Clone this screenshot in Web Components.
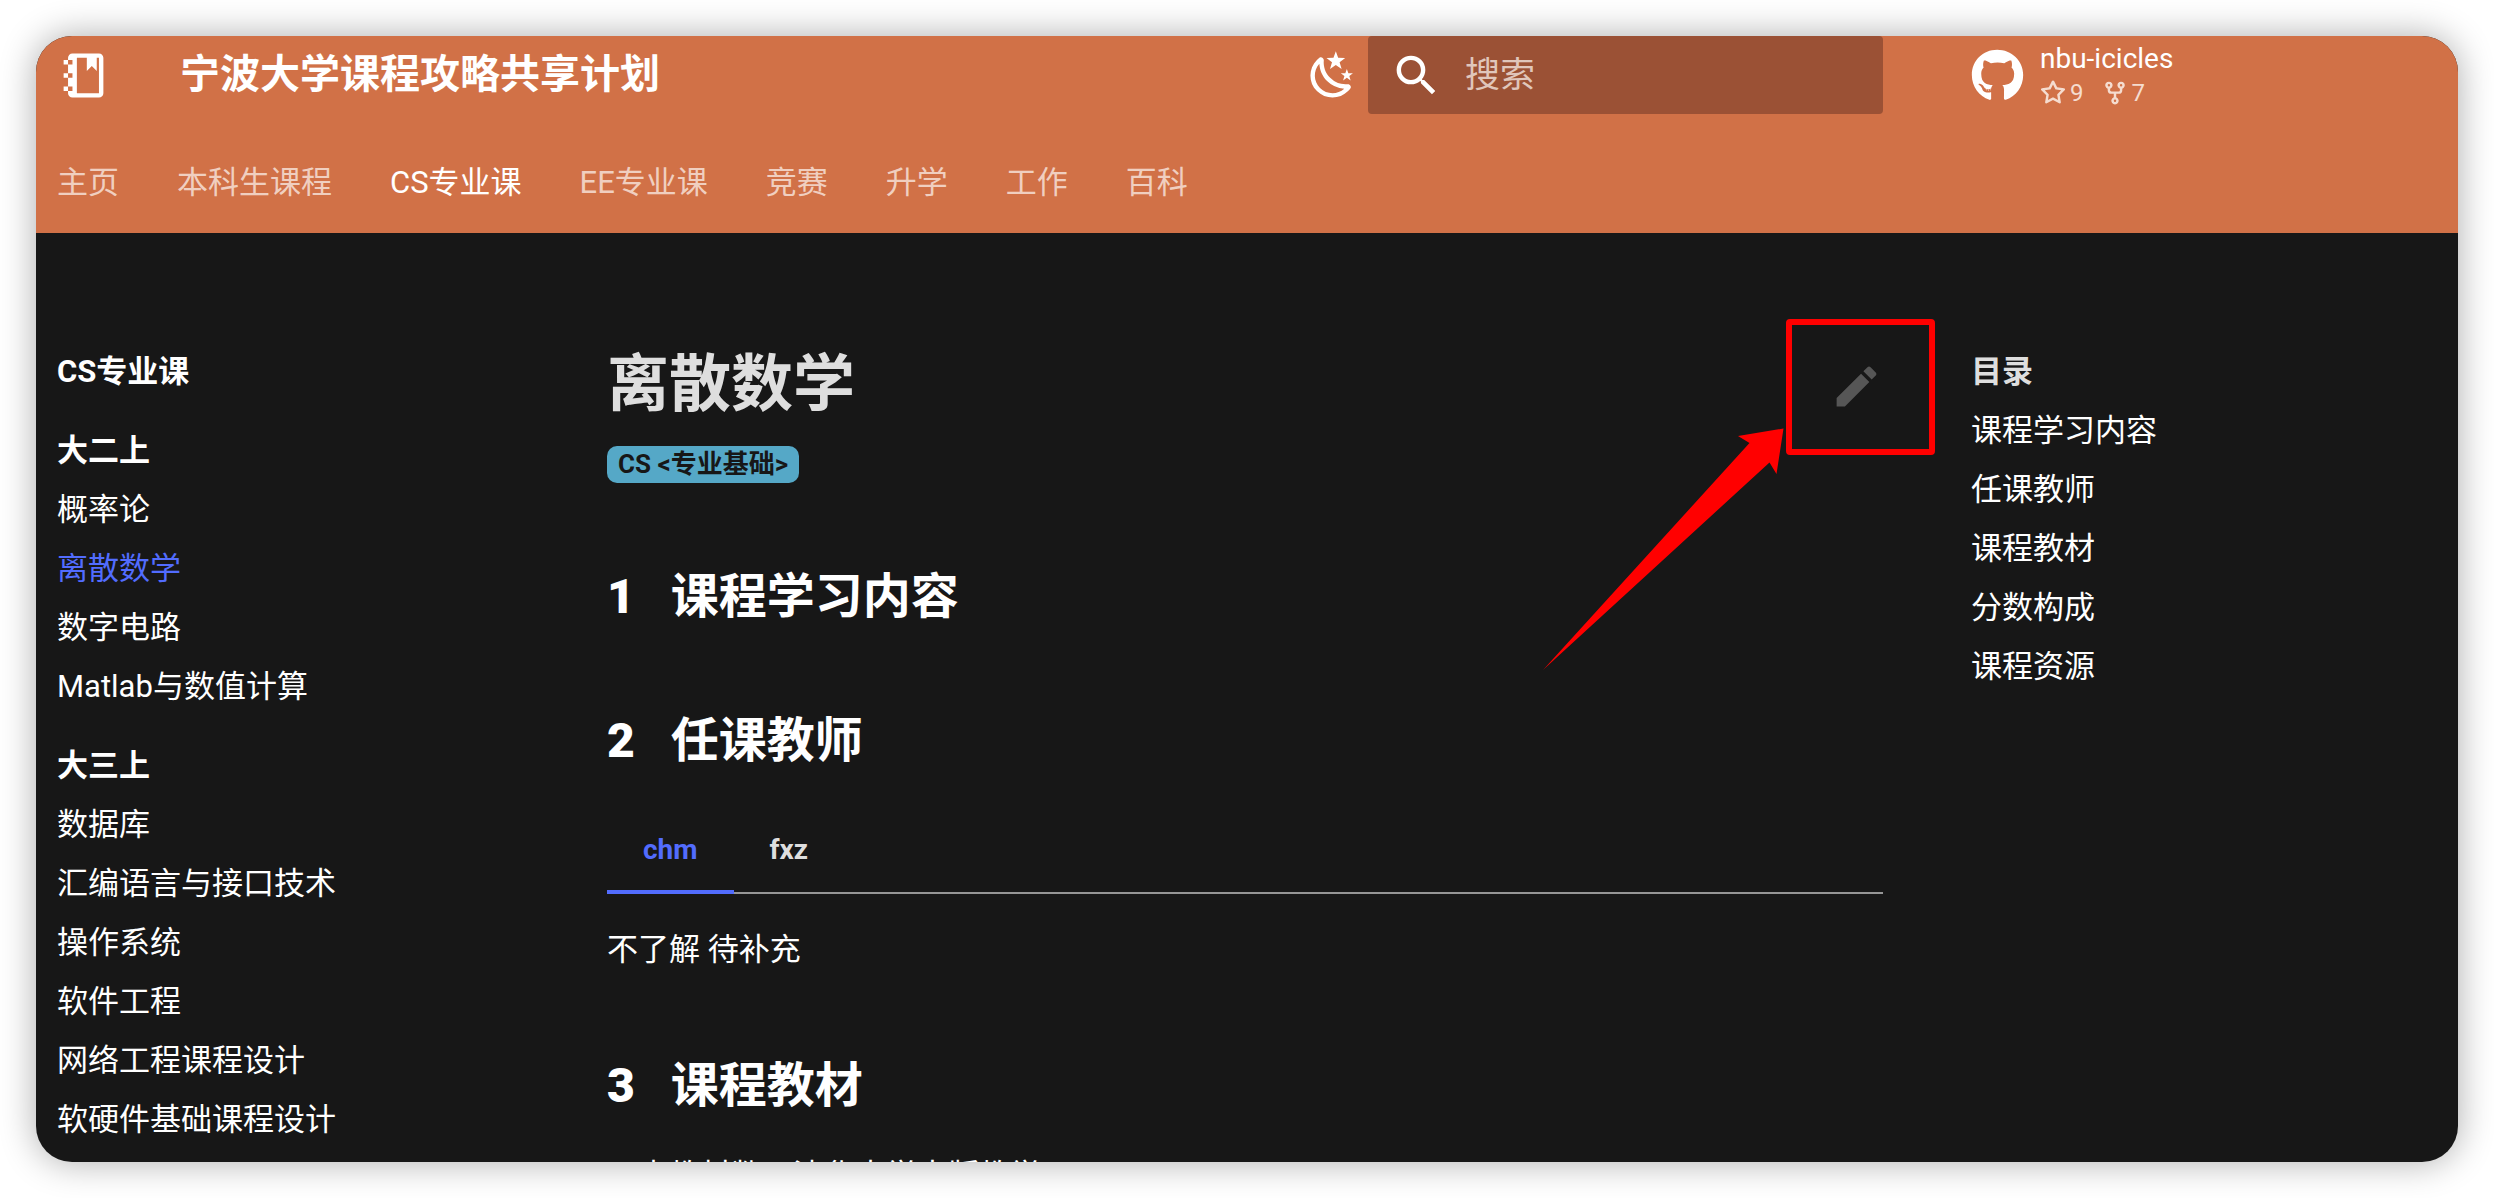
<!DOCTYPE html>
<html lang="zh-CN">
<head>
<meta charset="utf-8">
<title>离散数学 - 宁波大学课程攻略共享计划</title>
<style>
  html, body { margin: 0; height: 100%; }
  body {
    background: #fff;
    font-family: Roboto, "Noto Sans CJK SC", sans-serif;
    --primary: #d17147;
    --accent: #526cfe;
    --page: #171717;
    --muted: #dedede;
    --side: 532px;
  }
</style>
</head>
<body>
<course-site></course-site>

<script>
const define = (name, html, setup) => customElements.define(name, class extends HTMLElement {
  constructor() {
    super();
    this.attachShadow({ mode: 'open' }).innerHTML = html;
    if (setup) setup.call(this);
  }
});

const ICONS = {
  notebook: ['0 0 24 24', 'M3 7V5h2V4c0-1.1.9-2 2-2h12c1.1 0 2 .9 2 2v16c0 1.1-.9 2-2 2H7c-1.1 0-2-.9-2-2v-1H3v-2h2v-4H3v-2h2V7H3ZM5 5v2h2V5H5Zm0 6v2h2v-2H5Zm0 6v2h2v-2H5ZM9 4v16h10V4h-1v6l-2.25-2.25L13.5 10V4H9Z'],
  moon: ['0 0 24 24', 'm17.75 4.09-2.53 1.94.91 3.06-2.63-1.81-2.63 1.81.91-3.06-2.53-1.94L12.44 4l1.06-3 1.06 3 3.19.09m3.5 6.91-1.64 1.25.59 1.98-1.7-1.17-1.7 1.17.59-1.98L15.75 11l2.06-.05L18.5 9l.69 1.95 2.06.05m-2.28 4.95c.83-.08 1.72 1.1 1.19 1.85-.32.45-.66.87-1.08 1.27C15.17 23 8.84 23 4.94 19.07c-3.91-3.9-3.91-10.24 0-14.14.4-.4.82-.76 1.27-1.08.75-.53 1.93.36 1.85 1.19-.27 2.86.69 5.83 2.89 8.02a9.96 9.96 0 0 0 8.02 2.89m-1.64 2.02a12.08 12.08 0 0 1-7.8-3.47c-2.17-2.19-3.33-5-3.49-7.82-2.81 3.14-2.7 7.96.31 10.98 3.02 3.01 7.84 3.12 10.98.31Z'],
  magnify: ['0 0 24 24', 'M9.5 3A6.5 6.5 0 0 1 16 9.5c0 1.61-.59 3.09-1.56 4.23l.27.27h.79l5 5-1.5 1.5-5-5v-.79l-.27-.27A6.516 6.516 0 0 1 9.5 16 6.5 6.5 0 0 1 3 9.5 6.5 6.5 0 0 1 9.5 3m0 2C7 5 5 7 5 9.5S7 14 9.5 14 14 12 14 9.5 12 5 9.5 5Z'],
  pencil: ['0 0 24 24', 'M20.71 7.04c.39-.39.39-1.04 0-1.41l-2.34-2.34c-.37-.39-1.02-.39-1.41 0l-1.84 1.83 3.75 3.75M3 17.25V21h3.75L17.81 9.93l-3.75-3.75L3 17.25Z'],
  star: ['0 0 16 16', 'M8 .25a.75.75 0 0 1 .673.418l1.882 3.815 4.21.612a.75.75 0 0 1 .416 1.279l-3.046 2.97.719 4.192a.751.751 0 0 1-1.088.791L8 12.347l-3.766 1.98a.75.75 0 0 1-1.088-.79l.72-4.194L.818 6.374a.75.75 0 0 1 .416-1.28l4.21-.611L7.327.668A.75.75 0 0 1 8 .25Zm0 2.445L6.615 5.5a.75.75 0 0 1-.564.41l-3.097.45 2.24 2.184a.75.75 0 0 1 .216.664l-.528 3.084 2.769-1.456a.75.75 0 0 1 .698 0l2.77 1.456-.53-3.084a.75.75 0 0 1 .216-.664l2.24-2.183-3.096-.45a.75.75 0 0 1-.564-.41L8 2.694Z'],
  fork: ['0 0 16 16', 'M5 5.372v.878c0 .414.336.75.75.75h4.5a.75.75 0 0 0 .75-.75v-.878a2.25 2.25 0 1 1 1.5 0v.878a2.25 2.25 0 0 1-2.25 2.25h-1.5v2.128a2.251 2.251 0 1 1-1.5 0V8.5h-1.5A2.25 2.25 0 0 1 3.5 6.25v-.878a2.25 2.25 0 1 1 1.5 0ZM5 3.25a.75.75 0 1 0-1.5 0 .75.75 0 0 0 1.5 0Zm6.75.75a.75.75 0 1 0 0-1.5.75.75 0 0 0 0 1.5Zm-3 8.75a.75.75 0 1 0-1.5 0 .75.75 0 0 0 1.5 0Z'],
  github: ['0 0 496 512', 'M165.9 397.4c0 2-2.3 3.6-5.2 3.6-3.3.3-5.6-1.3-5.6-3.6 0-2 2.3-3.6 5.2-3.6 3-.3 5.6 1.3 5.6 3.6zm-31.1-4.5c-.7 2 1.3 4.3 4.3 4.9 2.6 1 5.6 0 6.2-2s-1.3-4.3-4.3-5.2c-2.6-.7-5.5.3-6.2 2.3zm44.2-1.7c-2.9.7-4.9 2.6-4.6 4.9.3 2 2.9 3.3 5.9 2.6 2.9-.7 4.9-2.6 4.6-4.6-.3-1.9-3-3.2-5.9-2.9zM244.8 8C106.1 8 0 113.3 0 252c0 110.9 69.8 205.8 169.5 239.2 12.8 2.3 17.3-5.6 17.3-12.1 0-6.2-.3-40.4-.3-61.4 0 0-70 15-84.7-29.8 0 0-11.4-29.1-27.8-36.6 0 0-22.9-15.7 1.6-15.4 0 0 24.9 2 38.6 25.8 21.9 38.6 58.6 27.5 72.9 20.9 2.3-16 8.8-27.1 16-33.7-55.9-6.2-112.3-14.3-112.3-110.5 0-27.5 7.6-41.3 23.6-58.9-2.6-6.5-11.1-33.3 2.6-67.9 20.9-6.5 69 27 69 27 20-5.6 41.5-8.5 62.8-8.5s42.8 2.9 62.8 8.5c0 0 48.1-33.6 69-27 13.7 34.7 5.2 61.4 2.6 67.9 16 17.7 25.8 31.5 25.8 58.9 0 96.5-58.9 104.2-114.8 110.5 9.2 7.9 17 22.9 17 46.4 0 33.7-.3 75.4-.3 83.6 0 6.5 4.6 14.4 17.3 12.1C428.2 457.8 496 362.9 496 252 496 113.3 383.5 8 244.8 8z']
};

define('ui-icon', `<style>
  :host { display: block; flex: none; width: var(--size, 53px); height: var(--size, 53px); }
  svg { display: block; width: 100%; height: 100%; fill: currentColor; }
</style><svg aria-hidden="true"><path fill-rule="evenodd"/></svg>`, function () {
  const [box, d] = ICONS[this.getAttribute('name')];
  this.shadowRoot.querySelector('svg').setAttribute('viewBox', box);
  this.shadowRoot.querySelector('path').setAttribute('d', d);
});

define('search-box', `<style>
  :host { display: block; width: 515px; }
  label { display: flex; align-items: center; height: 78px; padding-left: 22px; gap: 22px; box-sizing: border-box;
    background: #9b5135; border-radius: 4px; color: #fff; }
  input { flex: 1; min-width: 0; border: 0; padding: 2px 0 0; background: none; outline: 0;
    font: 35px/50px Roboto, "Noto Sans CJK SC", sans-serif; color: #fff; }
  input::placeholder { color: #e0c6bb; opacity: 1; }
</style><label><ui-icon name="magnify"></ui-icon><input type="text" placeholder="搜索" aria-label="搜索"></label>`);

define('repo-link', `<style>
  :host { display: block; }
  a { display: flex; align-items: center; gap: 16px; color: #fff; text-decoration: none; font-size: 28px; line-height: 36px; }
  ul { display: flex; gap: 18px; margin: 0; padding: 0; list-style: none; font-size: 24px; line-height: 32px; color: #f5dccf; }
  li { display: flex; align-items: center; gap: 4px; }
  li ui-icon { --size: 26px; }
</style><a href="#repo"><ui-icon name="github"></ui-icon><div>nbu-icicles
  <ul><li><ui-icon name="star"></ui-icon>9</li><li><ui-icon name="fork"></ui-icon>7</li></ul></div></a>`);

define('site-header', `<style>
  :host { display: block; background: var(--primary); color: #fff; }
  .bar { display: flex; align-items: center; height: 78px; padding-left: 21px; }
  .home { color: #fff; }
  .title { flex: 1; padding-left: 70px; font-size: 40px; font-weight: 700; line-height: 56px; }
  .mode { border: 0; padding: 0; margin-right: 9px; background: none; color: #fff; }
  repo-link { width: 487px; margin-left: 88px; }
  nav { display: flex; gap: 58px; padding: 47px 0 28px 21px; font-size: 31px; line-height: 44px; }
  a { color: #f0cfc0; text-decoration: none; }
  a.on { color: #fff; }
</style>
<div class="bar">
  <a class="home" href="#" aria-label="首页"><ui-icon name="notebook"></ui-icon></a>
  <span class="title">宁波大学课程攻略共享计划</span>
  <button class="mode" aria-label="切换主题"><ui-icon name="moon"></ui-icon></button>
  <search-box></search-box><repo-link></repo-link>
</div>
<nav><a href="#">主页</a><a href="#">本科生课程</a><a class="on" href="#">CS专业课</a><a href="#">EE专业课</a><a href="#">竞赛</a><a href="#">升学</a><a href="#">工作</a><a href="#">百科</a></nav>`);

define('nav-item', `<style>
  :host { display: block; margin-top: 15px; }
  :host([head]) { font-weight: 700; }
  :host([group]) { margin-top: 35px; }
  :host([current]) { --link: var(--accent); }
  a { display: block; color: var(--link, #fff); text-decoration: none; }
</style><a href="#"><slot></slot></a>`);

define('side-nav', `<style>
  :host { display: block; font-size: 31px; line-height: 44px; }
  h2 { margin: 0; font-size: 31px; font-weight: 700; color: var(--head, #fff); }
</style><nav><h2><slot name="title"></slot></h2><slot></slot></nav>`);

define('course-tabs', `<style>
  :host { display: block; margin-top: 31px; }
  .row { display: flex; box-shadow: inset 0 -2px #969696; }
  button { border: 0; border-bottom: 4px solid transparent; background: none; padding: 22px 36px 18px;
    font: 700 28px/44px Roboto, sans-serif; color: var(--muted); }
  button[aria-selected=true] { color: var(--accent); border-color: var(--accent); }
  p { margin: 34px 0 0; font-size: 31px; line-height: 44px; color: #fff; }
</style><div class="row" role="tablist"><button role="tab" aria-selected="true">chm</button><button role="tab" aria-selected="false">fxz</button></div><p><slot></slot></p>`);

define('section-title', `<style>
  :host { display: block; }
  h2 { display: flex; gap: 36px; margin: 0; font-size: 48px; line-height: 68px; font-weight: 700; color: #fff; }
</style><h2><b></b><slot></slot></h2>`, function () {
  this.shadowRoot.querySelector('b').textContent = this.getAttribute('number');
});

define('edit-button', `<style>
  :host { display: block; position: relative; flex: none; }
  button { display: block; border: 0; padding: 0; background: none; color: #565656; }
  .frame { position: absolute; left: -44px; top: -41px; width: 137px; height: 124px; border: 6px solid #f00; border-radius: 4px; }
  .arrow { position: absolute; right: 99px; top: 68px; width: 241px; height: 242px; fill: #f00; }
</style><button aria-label="编辑此页"><ui-icon name="pencil"></ui-icon></button>
<div class="frame"></div>
<svg class="arrow" viewBox="0 0 241 242" aria-hidden="true"><path d="M0 242 206.500 15 195 8 240.500 0.500 233.500 46 226.500 34.500Z"/></svg>`);

define('course-article', `<style>
  :host { display: block; color: #fff; }
  header { display: flex; justify-content: space-between; align-items: center; padding-top: 3px; }
  h1 { margin: 0; padding-bottom: 2px; font-size: 62px; line-height: 88px; font-weight: 700; color: var(--muted); }
  .tag { display: inline-block; margin-top: 15px; padding: 0 11px; border-radius: 10px; background: #55a8c7; color: #171717;
    font-size: 26px; line-height: 37px; font-weight: 700; text-decoration: none; vertical-align: top; }
  section-title { margin-top: 80px; }
  section-title + section-title { margin-top: 76px; }
  ul { margin: 34px 0 0; padding-left: 31px; font-size: 31px; line-height: 44px; list-style: none; }
</style>
<header><h1>离散数学</h1><edit-button></edit-button></header>
<a class="tag" href="#">CS &lt;专业基础&gt;</a>
<section-title number="1">课程学习内容</section-title>
<section-title number="2">任课教师</section-title>
<course-tabs>不了解 待补充</course-tabs>
<section-title number="3">课程教材</section-title>
<ul><li>本教材数，清华大学出版教学</li></ul>`);

define('course-site', `<style>
  :host { display: flex; flex-direction: column; box-sizing: border-box; height: 100vh; padding: 36px; }
  .window { flex: 1; min-height: 0; overflow: hidden; border-radius: 36px; background: var(--page); box-shadow: 0 0 36px rgba(0,0,0,.33); }
  main { display: grid; grid-template-columns: var(--side) minmax(0, 1fr) var(--side); padding-top: 105px; }
  side-nav { padding: 12px 21px 0; }
  side-nav.toc { padding-left: 45px; --head: var(--muted); }
  course-article { margin: 0 43px 0 39px; }
</style>
<div class="window">
<site-header></site-header>
<main>
<side-nav><span slot="title">CS专业课</span>
  <nav-item head group>大二上</nav-item><nav-item>概率论</nav-item><nav-item current>离散数学</nav-item><nav-item>数字电路</nav-item><nav-item>Matlab与数值计算</nav-item>
  <nav-item head group>大三上</nav-item><nav-item>数据库</nav-item><nav-item>汇编语言与接口技术</nav-item><nav-item>操作系统</nav-item><nav-item>软件工程</nav-item><nav-item>网络工程课程设计</nav-item><nav-item>软硬件基础课程设计</nav-item>
</side-nav>
<course-article></course-article>
<side-nav class="toc"><span slot="title">目录</span><nav-item>课程学习内容</nav-item><nav-item>任课教师</nav-item><nav-item>课程教材</nav-item><nav-item>分数构成</nav-item><nav-item>课程资源</nav-item></side-nav>
</main>
</div>`);
</script>
</body>
</html>
